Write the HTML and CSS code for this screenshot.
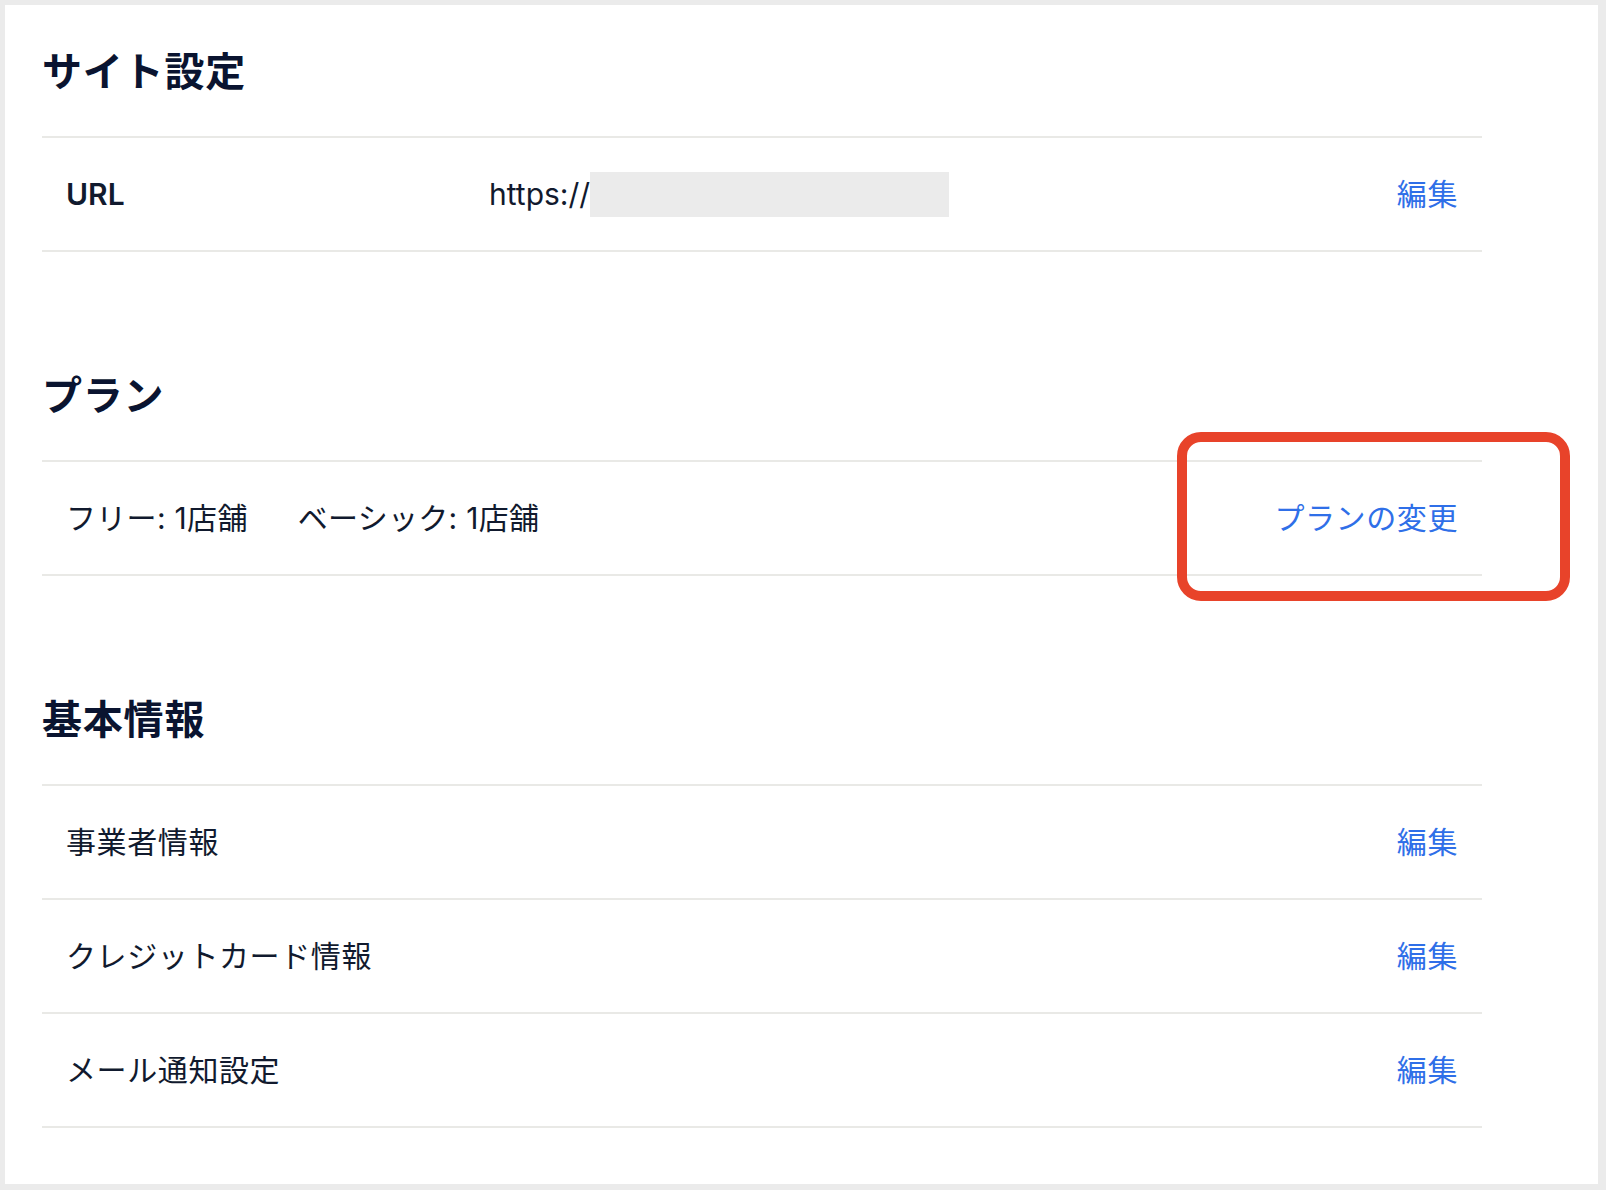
FILE: index.html
```html
<!DOCTYPE html>
<html lang="ja">
<head>
  <meta charset="UTF-8">
  <meta name="viewport" content="width=device-width, initial-scale=1.0">
  <title>設定</title>
  <link rel="stylesheet" href="styles.css">
</head>
<body>
  <div class="panel">
    <!-- サイト設定 -->
    <section class="section">
      <h2 class="section-title">サイト設定</h2>
      <ul class="setting-list">
        <li class="setting-row">
          <span class="setting-key">URL</span>
          <span class="setting-value">https://<span class="masked"></span></span>
          <a class="setting-action" href="#">編集</a>
        </li>
      </ul>
    </section>

    <!-- プラン -->
    <section class="section">
      <h2 class="section-title">プラン</h2>
      <ul class="setting-list">
        <li class="setting-row plan-row">
          <span class="setting-text">
            <span class="plan-item">フリー: 1店舗</span>
            <span class="plan-item">ベーシック: 1店舗</span>
          </span>
          <a class="setting-action" href="#">プランの変更</a>
          <div class="highlight"></div>
        </li>
      </ul>
    </section>

    <!-- 基本情報 -->
    <section class="section">
      <h2 class="section-title">基本情報</h2>
      <ul class="setting-list">
        <li class="setting-row">
          <span class="setting-text">事業者情報</span>
          <a class="setting-action" href="#">編集</a>
        </li>
        <li class="setting-row">
          <span class="setting-text">クレジットカード情報</span>
          <a class="setting-action" href="#">編集</a>
        </li>
        <li class="setting-row">
          <span class="setting-text">メール通知設定</span>
          <a class="setting-action" href="#">編集</a>
        </li>
      </ul>
    </section>
  </div>
</body>
</html>
```

FILE: styles.css
```css
html, body {
  height: 100%;
}
body {
  font-family: Inter, 'Noto Sans CJK JP', sans-serif;
  margin: 0;
  padding: 5px 8px 6px 5px;
  box-sizing: border-box;
  background-color: #ebebeb;
  color: #111a2e;
}
.panel {
  background-color: #fff;
  height: 100%;
  box-sizing: border-box;
  padding: 34px 0 0 37px;
}
.section {
  width: 1440px;
}
.section + .section {
  margin-top: 111px;
}
.section-title {
  font-family: 'Noto Sans CJK JP', sans-serif;
  font-size: 40px;
  line-height: 60px;
  font-weight: bold;
  letter-spacing: 0.8px;
  color: #0a1430;
  margin: 0 0 37px;
}
.setting-list {
  list-style: none;
  margin: 0;
  padding: 0;
  border-top: 2px solid #e9e9e6;
}
.setting-row {
  display: flex;
  align-items: center;
  height: 112px;
  padding: 0 24px;
  border-bottom: 2px solid #e9e9e6;
  font-size: 30px;
  position: relative;
}
.setting-key {
  width: 423px;
  font-weight: 600;
  flex-shrink: 0;
}
.setting-value {
  display: flex;
  align-items: center;
}
.masked {
  display: inline-block;
  width: 359px;
  height: 45px;
  background-color: #ebebeb;
}
.setting-text {
  display: flex;
  gap: 50px;
  letter-spacing: 0.6px;
  margin-bottom: 4px;
}
.plan-row .setting-text {
  letter-spacing: 0.3px;
}
.plan-row .setting-text,
.plan-row .setting-action {
  margin-bottom: 5px;
}
.setting-action {
  margin-left: auto;
  margin-bottom: 4px;
  letter-spacing: 0.6px;
  color: #2f6fe8;
  text-decoration: none;
}
.highlight {
  position: absolute;
  left: 1135px;
  top: -30px;
  width: 393px;
  height: 169px;
  box-sizing: border-box;
  border: 10px solid #e8432a;
  border-radius: 24px;
  pointer-events: none;
}
```
